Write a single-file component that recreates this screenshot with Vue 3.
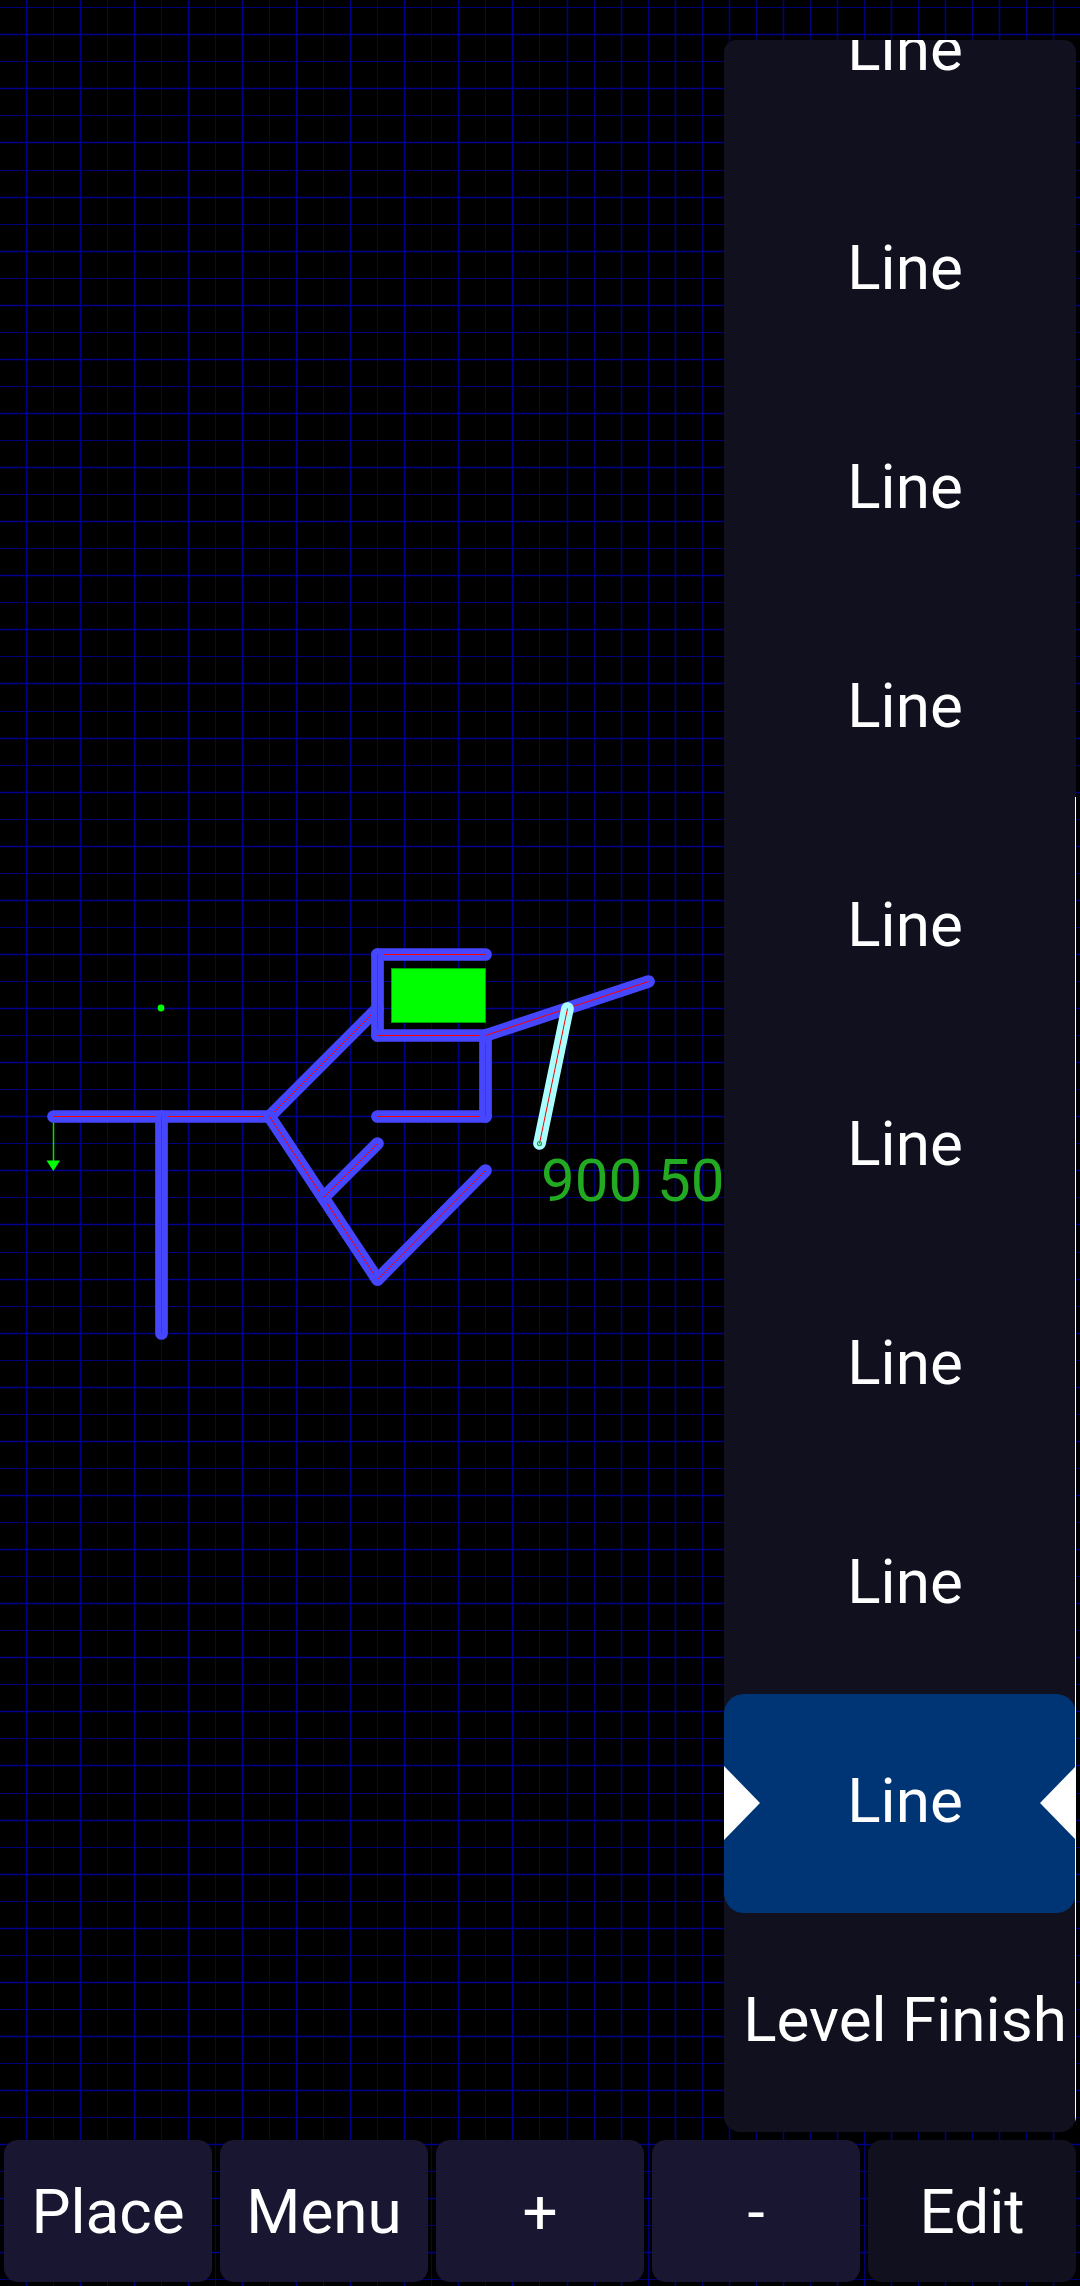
<script setup>
const W = 1080
const H = 2286
const px = (i) => Math.floor(26.02 + 27.05 * i) + 0.5
const py = (j) => Math.floor(7.72 + 27.05 * j) + 0.5

const vLines = []
for (let i = -1; i * 27.05 + 26 < W; i++) vLines.push({ x: px(i), major: i % 2 === 0 })
const hLines = []
for (let j = 0; j * 27.05 + 7.7 < H; j++) hLines.push({ y: py(j), major: j % 2 === 1 })

const seg = (a, b, c, d) => ({ x1: px(a), y1: py(b), x2: px(c), y2: py(d) })
const walls = [
  seg(1, 41, 9, 41),
  seg(5, 41, 5, 49),
  seg(9, 41, 13, 37),
  seg(13, 35, 17, 35),
  seg(13, 35, 13, 38),
  seg(13, 38, 17, 38),
  seg(13, 41, 17, 41),
  seg(17, 38, 17, 41),
  seg(17, 38, 23, 36),
  seg(9, 41, 13, 47),
  seg(13, 47, 17, 43),
  seg(11, 44, 13, 42),
]
const active = seg(20, 37, 19, 42)

const rows = [
  ...Array.from({ length: 9 }, (_, n) => ({ id: n, label: 'Line', selected: n === 8 })),
  { id: 9, label: 'Level Finish', selected: false },
]
const buttons = [
  { label: 'Place', alt: false },
  { label: 'Menu', alt: false },
  { label: '+', alt: false },
  { label: '-', alt: false },
  { label: 'Edit', alt: true },
]
</script>

<template>
  <div class="app">
    <svg class="board" :width="W" :height="H" :viewBox="`0 0 ${W} ${H}`">
      <rect :width="W" :height="H" fill="#000" />
      <line
        v-for="l in vLines"
        :key="'v' + l.x"
        :x1="l.x"
        :x2="l.x"
        y1="0"
        :y2="H"
        :class="l.major ? 'grid-major' : 'grid-minor'"
      />
      <line
        v-for="l in hLines"
        :key="'h' + l.y"
        :y1="l.y"
        :y2="l.y"
        x1="0"
        :x2="W"
        :class="l.major ? 'grid-major' : 'grid-minor'"
      />
      <rect class="goal" x="391.5" y="968.5" width="94" height="54" />
      <circle class="spawn" cx="161" cy="1008" r="3.4" />
      <line class="arrow" x1="53.5" y1="1120" x2="53.5" y2="1162" />
      <polygon class="arrow-head" points="46.5,1160.5 60,1160.5 53.3,1171" />
      <g v-for="(w, n) in walls" :key="n">
        <line class="wall" :x1="w.x1" :y1="w.y1" :x2="w.x2" :y2="w.y2" />
        <line class="core" :x1="w.x1" :y1="w.y1" :x2="w.x2" :y2="w.y2" />
      </g>
      <line class="wall wall-active" :x1="active.x1" :y1="active.y1" :x2="active.x2" :y2="active.y2" />
      <line class="core" :x1="active.x1" :y1="active.y1" :x2="active.x2" :y2="active.y2" />
      <circle class="handle" :cx="active.x2" :cy="active.y2" r="2" />
      <text class="coords" x="541" y="1201">900 500</text>
    </svg>

    <div class="stage">
      <div class="panel">
        <div class="rows">
          <div v-for="r in rows" :key="r.id" class="row" :class="{ selected: r.selected }">
            <span v-if="r.selected" class="tri tri-left"></span>
            <span class="label">{{ r.label }}</span>
            <span v-if="r.selected" class="tri tri-right"></span>
          </div>
        </div>
        <div class="scrollbar"></div>
      </div>
    </div>

    <div class="toolbar">
      <button v-for="b in buttons" :key="b.label" class="btn" :class="{ alt: b.alt }">{{ b.label }}</button>
    </div>
  </div>
</template>

<style scoped>
.app {
  position: relative;
  width: 1080px;
  height: 2286px;
  background: #000;
  overflow: hidden;
  display: flex;
  flex-direction: column;
  font-family: Roboto, "Liberation Sans", sans-serif;
  color: #fff;
}
.board {
  position: absolute;
  left: 0;
  top: 0;
}
.grid-major {
  stroke: #00008c;
  stroke-width: 1.5;
}
.grid-minor {
  stroke: #000078;
  stroke-width: 1;
}
.goal {
  fill: #00ff00;
  stroke: #00a000;
  stroke-width: 1;
}
.spawn {
  fill: #00ff00;
}
.arrow {
  stroke: #00e000;
  stroke-width: 1.5;
}
.arrow-head {
  fill: #00ff00;
}
.wall {
  stroke: #4646ff;
  stroke-width: 12.7;
  stroke-linecap: round;
}
.wall-active {
  stroke: #aaffff;
}
.core {
  stroke: #ff0000;
  stroke-width: 1;
}
.handle {
  fill: none;
  stroke: #22aa44;
  stroke-width: 1.2;
}
.coords {
  fill: #22aa22;
  font-family: Roboto, sans-serif;
  font-size: 60px;
}
.stage {
  position: relative;
  flex: 1;
  min-height: 0;
  display: flex;
  justify-content: flex-end;
  padding: 40px 4px 8px 0;
}
.panel {
  position: relative;
  width: 352px;
  border-radius: 12px 12px 16px 16px;
  background: #10101e;
  overflow: hidden;
}
.rows {
  height: 100%;
  display: flex;
  flex-direction: column;
  justify-content: flex-end;
}
.row {
  position: relative;
  flex: 0 0 219px;
  display: flex;
  align-items: center;
  justify-content: center;
  padding-left: 10px;
  font-size: 62px;
  line-height: 219px;
}
.row.selected {
  background: #003575;
  border-radius: 20px;
}
.label {
  white-space: nowrap;
  position: relative;
  top: -3px;
}
.tri {
  position: absolute;
  top: 72px;
  width: 0;
  height: 0;
  border-top: 37px solid transparent;
  border-bottom: 37px solid transparent;
}
.tri-left {
  left: 0;
  border-left: 36px solid #fff;
}
.tri-right {
  right: 0;
  border-right: 36px solid #fff;
}
.scrollbar {
  position: absolute;
  right: 0;
  top: 757px;
  bottom: 0;
  width: 1.5px;
  background: #fff;
}
.toolbar {
  position: relative;
  flex: 0 0 142px;
  display: flex;
  gap: 8px;
  padding: 0 4px 4px;
}
.btn {
  flex: 1;
  border: 0;
  padding: 0;
  border-radius: 14px;
  background: #191632;
  color: #fff;
  font: 62px Roboto, "Liberation Sans", sans-serif;
}
.btn.alt {
  background: #10101e;
}
</style>
